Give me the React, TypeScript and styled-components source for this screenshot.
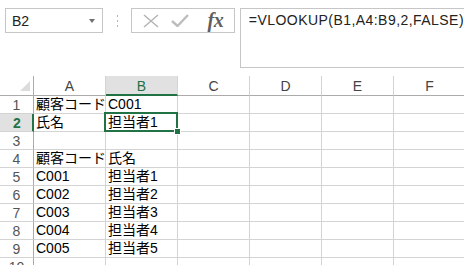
import React from "react";
import styled, { createGlobalStyle, css } from "styled-components";

const Global = createGlobalStyle`
  html, body { margin: 0; padding: 0; background: #fff; }
  body { font-family: "Liberation Sans", "Noto Sans CJK JP", sans-serif; }
`;

const Page = styled.div`
  width: 464px;
  height: 265px;
  overflow: hidden;
  background: #fff;
  display: flex;
  flex-direction: column;
  & > * { flex-shrink: 0; }
`;

const FormulaBar = styled.div`
  display: flex;
  align-items: flex-start;
  padding: 8px 0 0 5px;
  height: 68px;
  box-sizing: border-box;
`;

const NameBox = styled.div`
  width: 103px;
  height: 25px;
  box-sizing: border-box;
  border: 1px solid #c6c6c6;
  display: flex;
  align-items: center;
  justify-content: space-between;
  padding: 0 7px 0 6px;
  font-size: 14px;
  color: #222;
`;

const Arrow = styled.span`
  width: 0;
  height: 0;
  border-left: 3.5px solid transparent;
  border-right: 3.5px solid transparent;
  border-top: 4px solid #707070;
`;

const Grip = styled.div`
  width: 30px;
  height: 25px;
  display: flex;
  align-items: center;
  justify-content: center;
`;

const ButtonGroup = styled.div`
  width: 109px;
  height: 25px;
  box-sizing: border-box;
  border: 1px solid #c6c6c6;
  display: flex;
  align-items: center;
  padding-left: 8px;
`;

const IconSlot = styled.div<{ $w: number }>`
  width: ${(p) => p.$w}px;
  height: 23px;
  display: flex;
  align-items: center;
  justify-content: center;
`;

const Fx = styled.span`
  font-family: "Liberation Serif", serif;
  font-style: italic;
  font-weight: bold;
  font-size: 20px;
  color: #5f5f5f;
  letter-spacing: -0.5px;
  line-height: 1;
  margin-top: -2px;
`;

const FormulaBox = styled.div`
  margin-left: 5px;
  flex: 1;
  height: 60px;
  box-sizing: border-box;
  border: 1px solid #c6c6c6;
  border-right: none;
  padding: 3px 0 0 8px;
  font-size: 14px;
  letter-spacing: 0.45px;
  color: #222;
  white-space: nowrap;
`;

const Spacer = styled.div`
  height: 8px;
`;

const Grid = styled.div`
  display: grid;
  grid-template-columns: 34px repeat(6, 72px);
  grid-auto-rows: 18px;
  grid-template-rows: 20px;
`;

const Corner = styled.div`
  border-right: 1px solid #ababab;
  border-bottom: 1px solid #ababab;
  box-sizing: border-box;
  display: flex;
  align-items: flex-end;
  justify-content: flex-end;
  padding: 0 3px 4px 0;
`;

const ColHeader = styled.div<{ $active?: boolean }>`
  box-sizing: border-box;
  border-right: 1px solid #d4d4d4;
  border-bottom: 1px solid #ababab;
  display: flex;
  align-items: center;
  justify-content: center;
  font-size: 14px;
  color: #444;
  ${(p) =>
    p.$active &&
    css`
      background: #e1e1e1;
      color: #217346;
      border-bottom: 2px solid #217346;
      padding-top: 1px;
    `}
`;

const RowHeader = styled.div<{ $active?: boolean }>`
  box-sizing: border-box;
  border-right: 1px solid #ababab;
  border-bottom: 1px solid #d4d4d4;
  display: flex;
  align-items: center;
  justify-content: center;
  font-size: 14px;
  color: #555;
  ${(p) =>
    p.$active &&
    css`
      background: #e1e1e1;
      color: #217346;
      font-weight: bold;
      border-right: 2px solid #217346;
      padding-left: 2px;
    `}
`;

const Cell = styled.div<{ $selected?: boolean }>`
  position: relative;
  box-sizing: border-box;
  border-right: 1px solid #d4d4d4;
  border-bottom: 1px solid #d4d4d4;
  font-size: 14px;
  line-height: 17px;
  color: #000;
  padding-left: 2px;
  white-space: nowrap;
  ${(p) =>
    p.$selected &&
    css`
      &::after {
        content: "";
        position: absolute;
        left: -2px;
        top: -2px;
        right: -1px;
        bottom: -1px;
        border: 2px solid #217346;
        pointer-events: none;
      }
    `}
`;

const Handle = styled.span`
  position: absolute;
  right: -4px;
  bottom: -4px;
  width: 5px;
  height: 5px;
  background: #217346;
  border: 1px solid #fff;
  z-index: 2;
`;

const cols = ["A", "B", "C", "D", "E", "F"];

const data: Record<number, string[]> = {
  1: ["顧客コード", "C001"],
  2: ["氏名", "担当者1"],
  3: ["", ""],
  4: ["顧客コード", "氏名"],
  5: ["C001", "担当者1"],
  6: ["C002", "担当者2"],
  7: ["C003", "担当者3"],
  8: ["C004", "担当者4"],
  9: ["C005", "担当者5"],
  10: ["", ""],
};

export default function App() {
  const rows = Object.keys(data).map(Number);
  return (
    <Page>
      <Global />
      <FormulaBar>
        <NameBox>
          <span>B2</span>
          <Arrow />
        </NameBox>
        <Grip>
          <svg width="3" height="12" viewBox="0 0 3 12">
            <rect x="1" y="0" width="1" height="2" fill="#b5b5b5" />
            <rect x="1" y="5" width="1" height="2" fill="#b5b5b5" />
            <rect x="1" y="10" width="1" height="2" fill="#b5b5b5" />
          </svg>
        </Grip>
        <ButtonGroup>
          <IconSlot $w={22}>
            <svg width="16" height="14" viewBox="0 0 16 14">
              <path d="M1 1 L15 13 M15 1 L1 13" stroke="#b4b4b4" strokeWidth="1.5" fill="none" />
            </svg>
          </IconSlot>
          <IconSlot $w={36}>
            <svg width="18" height="13" viewBox="0 0 18 13">
              <path d="M1 7 L6.5 12 L17 1" stroke="#bdbdbd" strokeWidth="2.4" fill="none" />
            </svg>
          </IconSlot>
          <IconSlot $w={34}>
            <Fx>fx</Fx>
          </IconSlot>
        </ButtonGroup>
        <FormulaBox>=VLOOKUP(B1,A4:B9,2,FALSE)</FormulaBox>
      </FormulaBar>
      <Spacer />
      <Grid>
        <Corner>
          <svg width="10" height="10" viewBox="0 0 10 10">
            <path d="M10 0 L10 10 L0 10 Z" fill="#dcdcdc" />
          </svg>
        </Corner>
        {cols.map((c) => (
          <ColHeader key={c} $active={c === "B"}>
            {c}
          </ColHeader>
        ))}
        {rows.map((r) => (
          <React.Fragment key={r}>
            <RowHeader $active={r === 2}>{r}</RowHeader>
            {cols.map((c, i) => {
              const sel = r === 2 && c === "B";
              return (
                <Cell key={c} $selected={sel}>
                  {data[r][i] ?? ""}
                  {sel && <Handle />}
                </Cell>
              );
            })}
          </React.Fragment>
        ))}
      </Grid>
    </Page>
  );
}
